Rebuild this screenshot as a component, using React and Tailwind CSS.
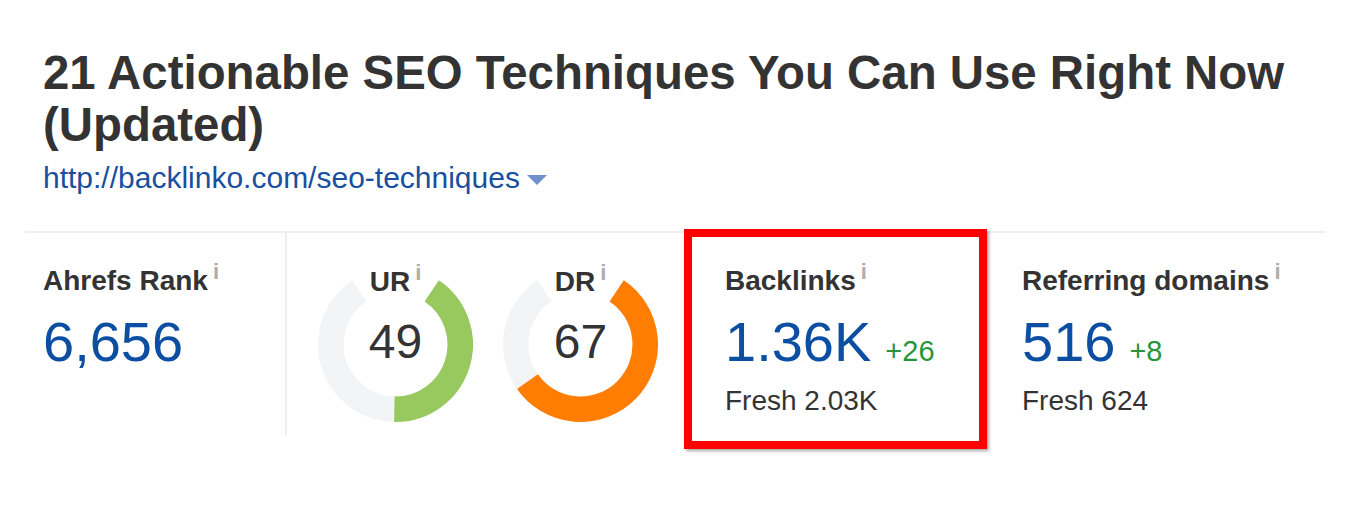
import React from "react";

const FONT = { fontFamily: '"Liberation Sans", Arial, Helvetica, sans-serif' };

function arcPath(a0, a1, r = 64.75, c = 77.5) {
  const rad = (d) => (d * Math.PI) / 180;
  const x0 = c + r * Math.sin(rad(a0));
  const y0 = c - r * Math.cos(rad(a0));
  const x1 = c + r * Math.sin(rad(a1));
  const y1 = c - r * Math.cos(rad(a1));
  const large = a1 - a0 > 180 ? 1 : 0;
  return `M ${x0} ${y0} A ${r} ${r} 0 ${large} 1 ${x1} ${y1}`;
}

function Info() {
  return (
    <span className="ml-[5px] mt-[-4px] text-[22px] leading-[22px] font-bold text-[#adadad]">i</span>
  );
}

function Label({ children }) {
  return (
    <div className="flex items-start">
      <span className="text-[28px] leading-[32px] font-bold text-[#333]">{children}</span>
      <Info />
    </div>
  );
}

function Gauge({ label, value, color }) {
  const start = 34;
  const end = start + value * 3;
  return (
    <div className="relative w-[155px] h-[155px]">
      <svg width="155" height="155" viewBox="0 0 155 155">
        <path d={arcPath(start, 326)} fill="none" stroke="#f3f4f6" strokeWidth="25.5" />
        <path d={arcPath(start, end)} fill="none" stroke={color} strokeWidth="25.5" />
      </svg>
      <div className="absolute left-0 right-0 -top-[1px] flex justify-center">
        <Label>{label}</Label>
      </div>
      <div className="absolute inset-0 flex items-center justify-center pb-[5px]">
        <span className="text-[48px] leading-[48px] text-[#333]">{value}</span>
      </div>
    </div>
  );
}

function Metric({ label, value, delta, fresh }) {
  return (
    <>
      <Label>{label}</Label>
      <div className="mt-[15px] flex items-baseline">
        <span className="text-[56px] leading-[60px] text-[#0b4ea2]">{value}</span>
        {delta && <span className="ml-[14px] text-[29px] leading-[32px] text-[#27963a]">{delta}</span>}
      </div>
      {fresh && <div className="mt-[13px] text-[28px] leading-[32px] text-[#333]">{fresh}</div>}
    </>
  );
}

export default function App() {
  return (
    <div className="min-h-[512px] bg-white pt-[47px]" style={FONT}>
      <div className="pl-[43px] pr-[40px]">
        <h1 className="text-[47.4px] leading-[52px] font-bold text-[#333]">
          21 Actionable SEO Techniques You Can Use Right Now (Updated)
        </h1>
        <div className="mt-[10px] flex items-center">
          <span className="text-[30px] leading-[34px] text-[#1a4fa0]">http://backlinko.com/seo-techniques</span>
          <svg className="ml-[7px] mt-[3px]" width="20" height="10" viewBox="0 0 20 10">
            <polygon points="0,0 20,0 10,10" fill="#6f90cc" />
          </svg>
        </div>
      </div>

      <div className="mt-[36px] ml-[25px] w-[1301px] flex items-start border-t-2 border-[#efefef]">
        <div className="w-[262px] h-[202px] border-r-2 border-[#eeeeee] pl-[18px] pt-[32px]">
          <Metric label="Ahrefs Rank" value="6,656" />
        </div>

        <div className="w-[397px] flex pl-[31px] gap-[30px] pt-[34px]">
          <Gauge label="UR" value={49} color="#97c95f" />
          <Gauge label="DR" value={67} color="#ff7d00" />
        </div>

        <div className="mt-[-4px] w-[303px] h-[220px] border-[8px] border-[#ff0000] shadow-[2px_2px_3px_rgba(0,0,0,0.35)] pl-[33px] pt-[28px]">
          <Metric label="Backlinks" value="1.36K" delta="+26" fresh="Fresh 2.03K" />
        </div>

        <div className="pl-[35px] pt-[32px]">
          <Metric label="Referring domains" value="516" delta="+8" fresh="Fresh 624" />
        </div>
      </div>
    </div>
  );
}
